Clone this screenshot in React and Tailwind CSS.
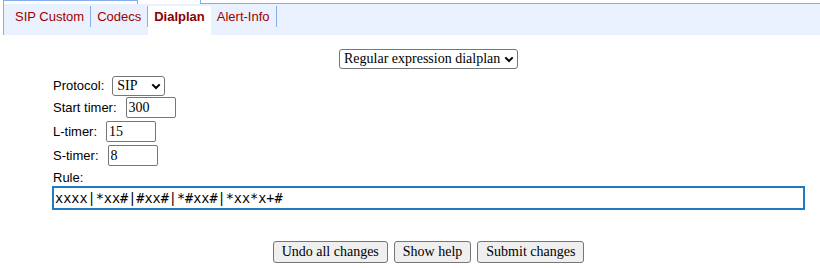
import { useState } from 'react'

const tabs = [
  { label: 'SIP Custom' },
  { label: 'Codecs' },
  { label: 'Dialplan', active: true },
  { label: 'Alert-Info' },
]

const serif = "font-['Liberation_Serif',serif] text-[14px]"

function Chevron() {
  return (
    <svg width="10" height="7" viewBox="0 0 10 7" className="shrink-0">
      <path d="M1.3 1.4 L5 5 L8.7 1.4" fill="none" stroke="#000" strokeWidth="2" />
    </svg>
  )
}

function Select({ options, className }) {
  return (
    <div className={`flex items-center border border-[#767676] rounded-[3px] bg-white pr-[3px] ${className}`}>
      <select className={`appearance-none flex-1 min-w-0 bg-transparent outline-none pl-[4px] leading-[18px] text-black ${serif}`}>
        {options.map(o => <option key={o}>{o}</option>)}
      </select>
      <Chevron />
    </div>
  )
}

function Field({ label, value, gap }) {
  return (
    <div className="flex items-center">
      <span className="pl-[1px]">{label}</span>
      <input
        defaultValue={value}
        className={`${gap} w-[50px] h-[21px] border border-[#767676] rounded-[2px] px-[2px] bg-white outline-none text-black ${serif}`}
      />
    </div>
  )
}

export default function App() {
  const [active] = useState('Dialplan')

  return (
    <div className="w-[820px] h-[268px] bg-white font-['Liberation_Sans',Arial,sans-serif] text-[13px] text-black overflow-hidden">
      {/* ── Tab strip ── */}
      <div className="ml-[3px] border-l border-[#86acec]">
        <div className="flex h-[4px]">
          <div className="w-[134px] border-t border-r border-[#86acec]" />
          <div className="w-[62px]" />
          <div className="flex-1 border-l border-b border-[#86acec]" />
        </div>
        <div className="h-[31px] bg-[#e9f0fe] flex items-start pl-[5px] pt-[2px]">
          {tabs.map(t => {
            const on = t.label === active
            return (
              <div key={t.label} className={`flex items-start h-[29px] ${on ? 'bg-white' : ''}`}>
                <span className={`px-[6px] pt-[3px] leading-[15px] ${on ? 'font-bold text-[#8b0000]' : 'text-[#a00000]'}`}>
                  {t.label}
                </span>
                {!on && <div className="w-px h-[21px] bg-[#86acec]" />}
              </div>
            )
          })}
        </div>
      </div>

      {/* ── Form ── */}
      <main className="pl-[52px] pr-[15px] pt-[14px]">
        <div className="flex justify-center">
          <Select options={['Regular expression dialplan']} className="w-[179px] h-[20px]" />
        </div>

        <div className="mt-[7px] flex flex-col items-start">
          <div className="flex items-center">
            <span className="pl-[1px]">Protocol:</span>
            <Select options={['SIP']} className="ml-[8px] w-[53px] h-[20px]" />
          </div>
          <div className="mt-[1px]"><Field label="Start timer:" value="300" gap="ml-[9px]" /></div>
          <div className="mt-[3px]"><Field label="L-timer:" value="15" gap="ml-[9px]" /></div>
          <div className="mt-[3px]"><Field label="S-timer:" value="8" gap="ml-[9px]" /></div>
          <div className="mt-[4px] pl-[1px] leading-[15px]">Rule:</div>
        </div>

        <input
          defaultValue="xxxx|*xx#|#xx#|*#xx#|*xx*x+#"
          className="mt-[1px] w-full h-[24px] border-2 border-[#1e7bc4] px-[1px] bg-white outline-none font-['DejaVu_Sans_Mono',monospace] text-[13.5px] text-black"
        />

        <div className="mt-[31px] flex justify-center gap-[6px]">
          {['Undo all changes', 'Show help', 'Submit changes'].map(b => (
            <button
              key={b}
              className={`h-[22px] px-[8px] border border-[#767676] rounded-[3px] bg-[#efefef] text-black leading-[18px] ${serif}`}
            >
              {b}
            </button>
          ))}
        </div>
      </main>
    </div>
  )
}
